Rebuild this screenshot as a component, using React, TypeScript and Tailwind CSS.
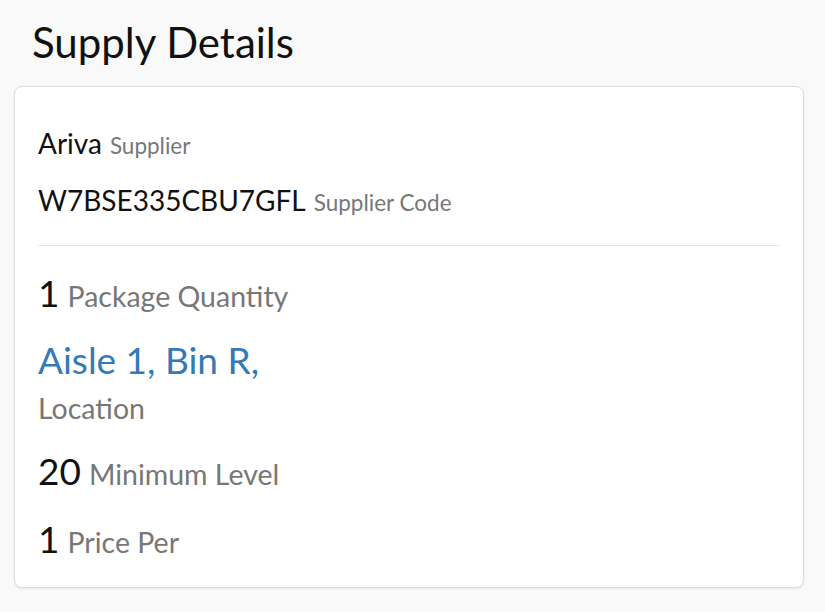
import React from "react";

const font = { fontFamily: "Lato, 'Liberation Sans', sans-serif" };

interface RowProps {
  value: string;
  label: string;
  big?: boolean;
  className?: string;
}

function Row({ value, label, big, className }: RowProps) {
  return (
    <div className={`flex items-baseline gap-[8px] ${className ?? ""}`}>
      <span
        className={
          big
            ? "text-[37px] leading-[1.2] text-[#111]"
            : "text-[28px] leading-[1.2] text-[#111]"
        }
      >
        {value}
      </span>
      <span
        className={
          big
            ? "text-[28.5px] leading-[1.2] text-[#777]"
            : "text-[22.5px] leading-[1.2] text-[#777]"
        }
      >
        {label}
      </span>
    </div>
  );
}

export default function App() {
  return (
    <div className="min-h-[612px] w-[825px] bg-[#f9f9f9]" style={font}>
      <h1 className="pl-[32px] pt-[17px] text-[42px] leading-[1.2] text-[#111]">
        Supply Details
      </h1>
      {/* card */}
      <div className="ml-[14px] mt-[19px] w-[790px] rounded-[8px] border border-[#dcdcdc] bg-white px-[23px] pt-[40px] pb-[26px] shadow-[0_1px_2px_rgba(0,0,0,0.08)]">
        <Row value="Ariva" label="Supplier" />
        <Row value="W7BSE335CBU7GFL" label="Supplier Code" className="mt-[23px]" />
        <div className="mt-[27px] h-px bg-[#e5e5e5]" />
        <Row value="1" label="Package Quantity" big className="mt-[25px]" />
        <div className="mt-[23px] text-[37px] leading-[1.2] text-[#337ab7]">
          Aisle 1, Bin R,
        </div>
        <div className="mt-[9px] text-[28.5px] leading-[1.2] text-[#777]">Location</div>
        <Row value="20" label="Minimum Level" big className="mt-[23px]" />
        <Row value="1" label="Price Per" big className="mt-[24px]" />
      </div>
    </div>
  );
}
